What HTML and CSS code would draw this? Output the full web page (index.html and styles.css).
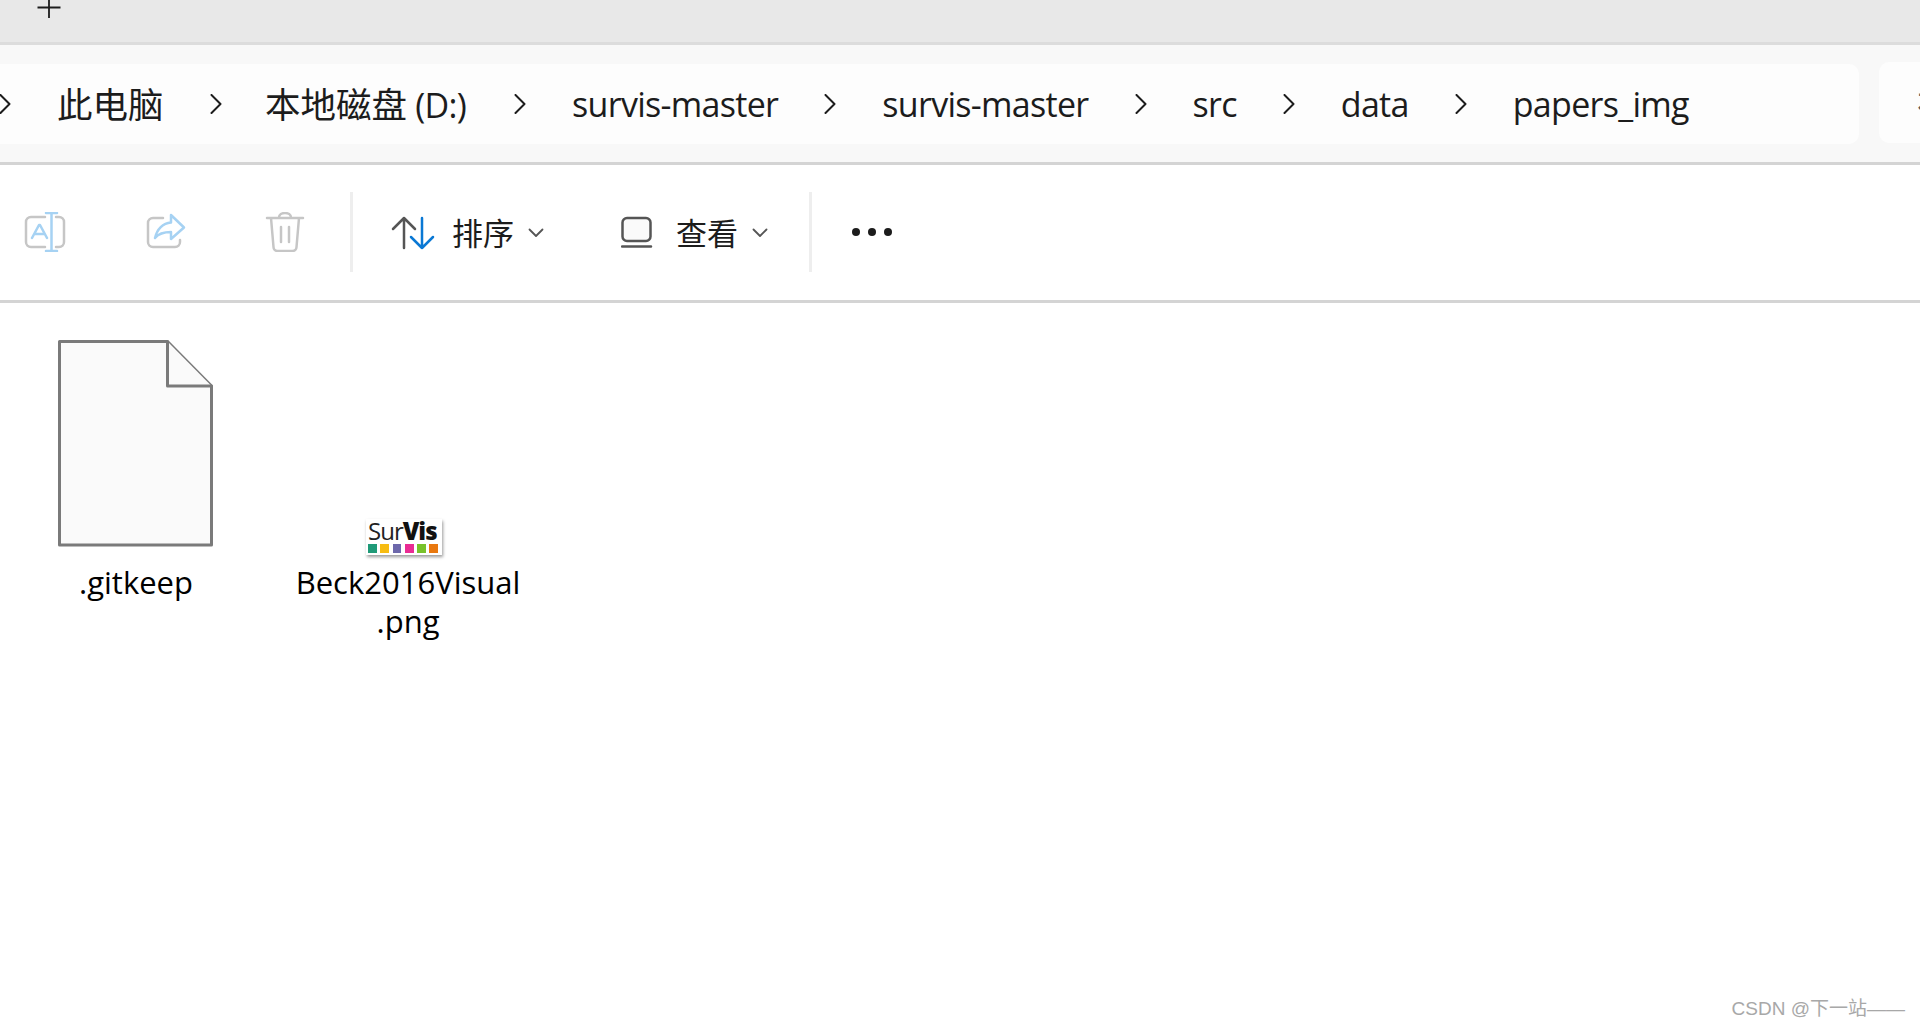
FILE: index.html
```html
<!DOCTYPE html>
<html lang="zh-CN">
<head>
<meta charset="utf-8">
<title>papers_img</title>
<link rel="stylesheet" href="styles.css">
</head>
<body>
<header class="tabbar">
  <svg class="new-tab" width="24" height="24" viewBox="0 0 24 24"><path d="M12 0V18M0.500 7.500H23.500" /></svg>
</header>
<nav class="addressbar">
  <div class="crumbs">
    <span class="sep first"><svg width="12" height="20" viewBox="0 0 12 20"><path d="M1.500 1L10.500 10L1.500 19"/></svg></span>
    <span class="crumb"><span class="cjk">此电脑</span></span>
    <span class="sep"><svg width="12" height="20" viewBox="0 0 12 20"><path d="M1.500 1L10.500 10L1.500 19"/></svg></span>
    <span class="crumb drive"><span class="cjk">本地磁盘</span> (D:)</span>
    <span class="sep"><svg width="12" height="20" viewBox="0 0 12 20"><path d="M1.500 1L10.500 10L1.500 19"/></svg></span>
    <span class="crumb">survis-master</span>
    <span class="sep"><svg width="12" height="20" viewBox="0 0 12 20"><path d="M1.500 1L10.500 10L1.500 19"/></svg></span>
    <span class="crumb">survis-master</span>
    <span class="sep"><svg width="12" height="20" viewBox="0 0 12 20"><path d="M1.500 1L10.500 10L1.500 19"/></svg></span>
    <span class="crumb">src</span>
    <span class="sep"><svg width="12" height="20" viewBox="0 0 12 20"><path d="M1.500 1L10.500 10L1.500 19"/></svg></span>
    <span class="crumb">data</span>
    <span class="sep"><svg width="12" height="20" viewBox="0 0 12 20"><path d="M1.500 1L10.500 10L1.500 19"/></svg></span>
    <span class="crumb">papers_img</span>
  </div>
  <div class="search"><span class="search-glyph">在</span></div>
</nav>
<section class="toolbar">
  <div class="tool-group actions">
    <button class="tool icon-only">
      <svg width="44" height="40" viewBox="0 0 44 40" fill="none" stroke-width="2.500">
        <path class="grey" d="M22 5H8A5 5 0 0 0 3 10V30A5 5 0 0 0 8 35H22M33 5H36A5 5 0 0 1 41 10V30A5 5 0 0 1 36 35H33"/>
        <path class="pale" d="M23 1H34M23 39H34M28.500 1V39M9 26L16 13H17L24 26M11.500 22H21.500"/>
      </svg>
    </button>
    <button class="tool icon-only">
      <svg width="44" height="40" viewBox="0 0 44 40" fill="none" stroke-width="2.500">
        <path class="grey" d="M20 6H10A5 5 0 0 0 5 11V30A5 5 0 0 0 10 35H32A5 5 0 0 0 37 30V28"/>
        <path class="pale" d="M28 3L41 15.500L28 27V20C22 20 16 21 12 26C14 17 20 11 28 10.500Z"/>
      </svg>
    </button>
    <button class="tool icon-only">
      <svg width="44" height="40" viewBox="0 0 44 40" fill="none" stroke-width="2.500" class="grey">
        <path d="M4 6H40M16 5.500C16 -0.500 28 -0.500 28 5.500M8 6L10.500 35A4 4 0 0 0 14.500 39H29.500A4 4 0 0 0 33.500 35L36 6M18 15V30M26 15V30"/>
      </svg>
    </button>
  </div>
  <span class="tool-divider"></span>
  <div class="tool-group menus">
    <button class="tool menu sort">
      <svg width="44" height="34" viewBox="0 0 44 34" fill="none" stroke-width="2.500">
        <path class="dark" d="M13 32V2M2 13L13 2L24 13"/>
        <path class="blue" d="M31 2V32M20 21L31 32L42 21"/>
      </svg>
      <span class="menu-label">排序</span>
      <svg class="caret" width="16" height="10" viewBox="0 0 16 10"><path d="M1.500 1.500L8 8L14.500 1.500"/></svg>
    </button>
    <button class="tool menu view">
      <svg class="view-icon" width="32" height="32" viewBox="0 0 32 32" fill="#fafafa" stroke-width="2.500">
        <path class="dark" d="M6 2H25A4.500 4.500 0 0 1 29.500 6.500V20.500A4.500 4.500 0 0 1 25 25H6A4.500 4.500 0 0 1 1.500 20.500V6.500A4.500 4.500 0 0 1 6 2Z"/>
        <path class="dark" d="M1 30.500H30"/>
      </svg>
      <span class="menu-label">查看</span>
      <svg class="caret" width="16" height="10" viewBox="0 0 16 10"><path d="M1.500 1.500L8 8L14.500 1.500"/></svg>
    </button>
  </div>
  <span class="tool-divider"></span>
  <button class="tool more"><i></i><i></i><i></i></button>
</section>
<main class="files">
  <figure class="file">
    <div class="thumb">
      <svg class="doc-icon" width="158" height="207" viewBox="0 0 158 207"><path class="doc" d="M2.500 1.500H110.500L154.500 46V205H2.500Z"/><path class="doc" d="M110.500 1.500V46H154.500"/></svg>
    </div>
    <figcaption>.gitkeep</figcaption>
  </figure>
  <figure class="file png">
    <div class="thumb">
      <div class="logo">
        <div class="logo-text">Sur<b>Vis</b></div>
        <div class="swatches"><i class="s1"></i><i class="s2"></i><i class="s3"></i><i class="s4"></i><i class="s5"></i><i class="s6"></i></div>
      </div>
    </div>
    <figcaption>Beck2016Visual<br>.png</figcaption>
  </figure>
</main>
<footer class="watermark">CSDN @下一站——</footer>
</body>
</html>
```
FILE: styles.css
```css
* { box-sizing: border-box; }
html, body { margin: 0; height: 100%; overflow: hidden; }
body {
  background: #fff;
  font-family: "Open Sans", "Noto Sans CJK SC", sans-serif;
  color: #1c1c1c;
  display: flex;
  flex-direction: column;
  position: relative;
}
svg { display: block; flex: none; }
svg path { stroke-linecap: round; stroke-linejoin: round; }

.tabbar {
  height: 45px;
  background: #e8e8e8;
  border-bottom: 3px solid #dcdcdc;
  padding-left: 37px;
  flex: none;
}
.new-tab { fill: none; stroke: #1c1c1c; stroke-width: 1.800; }
.new-tab path { stroke-linecap: butt; }

.addressbar {
  height: 120px;
  flex: none;
  background: #f8f8f8;
  border-bottom: 3px solid #d4d4d4;
  padding-top: 19px;
  display: flex;
  gap: 20px;
}
.crumbs {
  width: 1859px;
  height: 80px;
  background: #fdfdfd;
  border-radius: 0 10px 10px 0;
  display: flex;
  align-items: center;
  overflow: hidden;
  flex: none;
}
.crumb {
  font-size: 34px;
  line-height: 46px;
  letter-spacing: -0.700px;
  white-space: nowrap;
}
.cjk { font-size: 35.500px; letter-spacing: 0; }
.drive { margin: 0 2px 0 -2.500px; }
.sep {
  width: 104px;
  display: flex;
  justify-content: center;
  flex: none;
}
.sep.first { margin-left: -47px; }
.sep svg { fill: none; stroke: #1c1c1c; stroke-width: 2; }
.search {
  flex: 1;
  height: 81px;
  margin-top: -2px;
  background: #fdfdfd;
  border-radius: 10px 0 0 10px;
  overflow: hidden;
  display: flex;
  align-items: center;
  padding-left: 38px;
}
.search-glyph { font-size: 34px; color: #5a5a5a; white-space: nowrap; }

.toolbar {
  height: 138px;
  flex: none;
  border-bottom: 3px solid #d4d4d4;
  display: flex;
  align-items: center;
}
.tool {
  background: none;
  border: 0;
  padding: 0;
  font: inherit;
  color: inherit;
  display: flex;
  align-items: center;
}
.tool-group { display: flex; align-items: center; }
.actions { padding-left: 23px; gap: 76px; width: 350px; }
.icon-only { width: 44px; height: 44px; margin-bottom: 2px; }
.tool-divider { width: 3px; height: 80px; background: #eeeeee; flex: none; margin-bottom: 1px; }
.grey { stroke: #c6c6c6; }
.pale { stroke: #a6d2f3; }
.dark { stroke: #555555; }
.blue { stroke: #0a78d4; }
.menus { padding-left: 38px; width: 456px; }
.menu-label { font-size: 31px; line-height: 44px; }
.sort .menu-label { margin-left: 17px; }
.view { margin-left: 77px; }
.view-icon { margin-bottom: 2px; }
.view .menu-label { margin-left: 23px; }
.caret { fill: none; stroke: #555555; stroke-width: 1.800; margin-left: 14px; }
.more { padding-left: 40px; gap: 8px; margin-bottom: 2px; }
.more i { width: 8px; height: 8px; border-radius: 50%; background: #1c1c1c; display: block; }

.files {
  flex: 1;
  display: flex;
  align-items: flex-start;
  padding: 37px 0 0 57px;
}
.file { margin: 0; display: flex; flex-direction: column; align-items: center; }
.file:first-child { width: 158px; }
.thumb { height: 215px; display: flex; align-items: flex-end; justify-content: center; }
.doc-icon { margin-bottom: 8px; }
.doc { fill: #fafafa; stroke: #7a7a7a; stroke-width: 3; stroke-linejoin: round; }
.file figcaption {
  font-size: 31px;
  line-height: 39px;
  text-align: center;
  color: #000;
  white-space: nowrap;
  margin-top: 8px;
  font-family: "Open Sans", sans-serif;
}
.png { margin-left: 80px; width: 226px; }
.logo {
  width: 76px;
  height: 36px;
  background: #fff;
  box-shadow: 1px 2px 3px rgba(0,0,0,.4);
  padding: 1px 0 0 2px;
  margin-right: 8px;
}
.logo-text { font-size: 24px; line-height: 22px; font-family: "Open Sans", sans-serif; color: #222; letter-spacing: -1px; white-space: nowrap; }
.logo-text b { font-weight: 800; color: #111; }
.swatches { display: flex; gap: 3.600px; padding-top: 2px; }
.swatches i { width: 8.700px; height: 9px; display: block; }
.s1 { background: #1f9a78; }
.s2 { background: #f7bc12; }
.s3 { background: #6d68ab; }
.s4 { background: #e92b94; }
.s5 { background: #78c22b; }
.s6 { background: #e9780f; }

.watermark {
  position: absolute;
  right: 15px;
  bottom: 6px;
  font-family: "Liberation Sans", "Noto Sans CJK SC", sans-serif;
  font-size: 19px;
  line-height: 24px;
  color: #a8a8a8;
}
```
